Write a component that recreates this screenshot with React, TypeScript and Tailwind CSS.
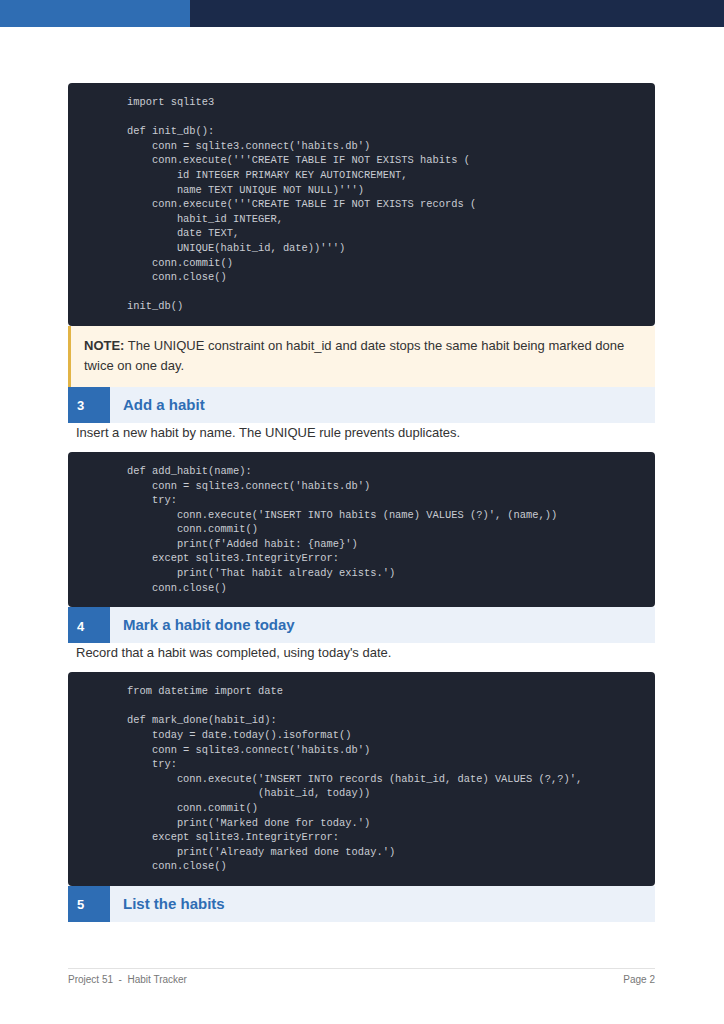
import React from "react";

const code1 = `import sqlite3

def init_db():
    conn = sqlite3.connect('habits.db')
    conn.execute('''CREATE TABLE IF NOT EXISTS habits (
        id INTEGER PRIMARY KEY AUTOINCREMENT,
        name TEXT UNIQUE NOT NULL)''')
    conn.execute('''CREATE TABLE IF NOT EXISTS records (
        habit_id INTEGER,
        date TEXT,
        UNIQUE(habit_id, date))''')
    conn.commit()
    conn.close()

init_db()`;

const code2 = `def add_habit(name):
    conn = sqlite3.connect('habits.db')
    try:
        conn.execute('INSERT INTO habits (name) VALUES (?)', (name,))
        conn.commit()
        print(f'Added habit: {name}')
    except sqlite3.IntegrityError:
        print('That habit already exists.')
    conn.close()`;

const code3 = `from datetime import date

def mark_done(habit_id):
    today = date.today().isoformat()
    conn = sqlite3.connect('habits.db')
    try:
        conn.execute('INSERT INTO records (habit_id, date) VALUES (?,?)',
                     (habit_id, today))
        conn.commit()
        print('Marked done for today.')
    except sqlite3.IntegrityError:
        print('Already marked done today.')
    conn.close()`;

function Code({ text }: { text: string }) {
  return (
    <div className="bg-[#1f2430] rounded-[4px] pt-[12px] pb-[12px] pl-[59px] pr-4">
      <pre className="m-0 whitespace-pre text-[10.4px] leading-[14.6px] text-[#c9ccd3] font-['Liberation_Mono','DejaVu_Sans_Mono',monospace]">
        {text}
      </pre>
    </div>
  );
}

function Section({ n, title }: { n: string; title: string }) {
  return (
    <div className="flex h-[36px] bg-[#ebf1f9]">
      <div className="w-[42px] bg-[#2e6db4] text-white font-bold text-[13px] flex items-center pl-[9px] pt-[2px]">
        {n}
      </div>
      <div className="flex items-center pl-[13px] text-[#2e6db4] font-bold text-[15px]">{title}</div>
    </div>
  );
}

export default function App() {
  return (
    <div className="w-[724px] h-[1024px] bg-white font-['Liberation_Sans',Arial,sans-serif] text-[#333333] relative">
      <div className="flex h-[27px]">
        <div className="w-[190px] bg-[#2f6db3]" />
        <div className="flex-1 bg-[#1b2a4a]" />
      </div>
      <div className="px-[68px] pr-[69px] pt-[56px]">
        <Code text={code1} />
        <div className="bg-[#fef5e6] border-l-[3px] border-[#e2b446] pl-[13px] pr-4 pt-[10px] pb-[11px] text-[13px] leading-[20px] text-[#333]">
          <p>
            <b>NOTE:</b> The UNIQUE constraint on habit_id and date stops the same habit being marked done twice on one day.
          </p>
        </div>
        <Section n="3" title="Add a habit" />
        <p className="text-[13px] leading-[20px] pl-[8px] mb-[9px]">Insert a new habit by name. The UNIQUE rule prevents duplicates.</p>
        <Code text={code2} />
        <Section n="4" title="Mark a habit done today" />
        <p className="text-[13px] leading-[20px] pl-[8px] mb-[9px]">Record that a habit was completed, using today's date.</p>
        <Code text={code3} />
        <Section n="5" title="List the habits" />
        <div className="mt-[46px] border-t border-[#e2e2e2] pt-[4px] flex justify-between text-[10px] leading-[14px] text-[#777]">
          <span className="whitespace-pre">Project 51  -  Habit Tracker</span>
          <span>Page 2</span>
        </div>
      </div>
    </div>
  );
}
